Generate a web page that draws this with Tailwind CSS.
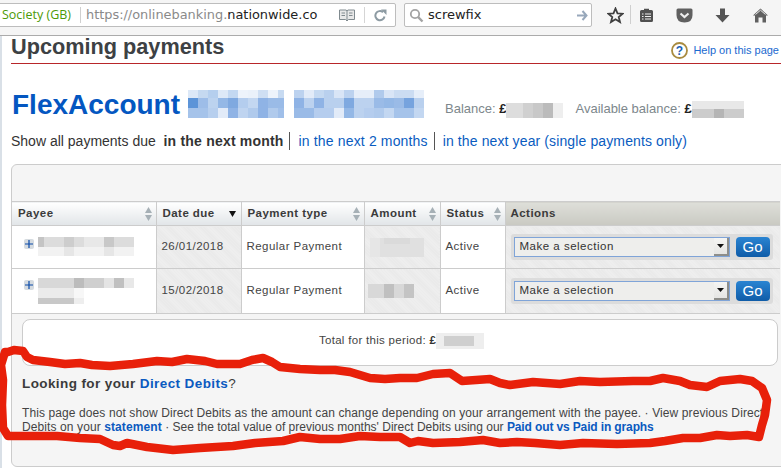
<!DOCTYPE html>
<html lang="en">
<head>
<meta charset="utf-8">
<title>Upcoming payments</title>
<script src="https://cdn.jsdelivr.net/npm/@tailwindcss/browser@4"></script>
</head>
<body class="w-[781px] h-[468px] overflow-hidden bg-white font-['Liberation_Sans',Arial,sans-serif] relative">
<!-- browser toolbar -->
<header class="h-[36px] bg-[#f5f5f5] border-b border-b-[#ababab] flex items-start font-['DejaVu_Sans',sans-serif]">
  <div class="mt-[3px] -ml-[4px] w-[400px] h-[24px] bg-white border border-[#bdbdbd] rounded-[2px] flex items-center text-[12.9px] shrink-0">
    <span class="ml-[5px] text-[#4c9a06] w-[76px] whitespace-nowrap font-['Open_Sans',sans-serif] text-[12.5px]">Society (GB)</span>
    <span class="w-px h-[16px] bg-[#d0d0d0] ml-[2px]"></span>
    <span class="ml-[5px] whitespace-nowrap text-[#8a8a8a] w-[232px]">https://onlinebanking.<span class="text-[#222]">nationwide.co</span></span>
    <svg class="ml-[21px]" width="16" height="13" viewBox="0 0 16 13"><path d="M0.5 1H7.2L8 2L8.8 1H15.5V10.5H9.5L8 12L6.5 10.5H0.5Z" fill="#e8e8e8" stroke="#808a8f"/><path d="M8 2V11M2.5 4H6M2.5 6.5H6M10 4H13.5M10 6.5H13.5" stroke="#808a8f"/></svg>
    <span class="w-px h-[16px] bg-[#d5d5d5] ml-[9px]"></span>
    <svg class="ml-[9px]" width="13" height="13" viewBox="0 0 13 13"><path d="M10.5 7.5A4.6 4.6 0 1 1 9 3.2" fill="none" stroke="#8d9ba3" stroke-width="2"/><path d="M7 .5L12.5 .5V6Z" fill="#8d9ba3"/></svg>
  </div>
  <div class="mt-[3px] ml-[8px] w-[188px] h-[24px] bg-white border border-[#bdbdbd] rounded-[2px] flex items-center text-[13px] shrink-0">
    <svg class="ml-[4px]" width="15" height="15" viewBox="0 0 15 15"><circle cx="6" cy="6" r="4.2" fill="none" stroke="#a3a3a3" stroke-width="1.8"/><path d="M9.2 9.2L13.5 13.5" stroke="#a3a3a3" stroke-width="2.4"/></svg>
    <span class="ml-[4px] text-[#222] flex-1">screwfix</span>
    <svg class="mr-[3px]" width="12" height="11" viewBox="0 0 12 11"><path d="M1 5.5H10M6.5 1L10.5 5.5L6.5 10" fill="none" stroke="#98a8bb" stroke-width="2"/></svg>
  </div>
  <svg class="mt-[7px] ml-[15px]" width="17" height="17" viewBox="0 0 17 17"><path d="M8.5 1.5L10.5 6.3L15.7 6.7L11.7 10L13 15L8.5 12.3L4 15L5.3 10L1.3 6.7L6.5 6.3Z" fill="none" stroke="#3f3f3f" stroke-width="1.8"/></svg>
  <span class="w-px h-[19px] bg-[#cfcfcf] mt-[5px] ml-[6px]"></span>
  <svg class="mt-[8px] ml-[8px]" width="15" height="15" viewBox="0 0 15 15"><path d="M1 3.5Q1 2 2.5 2H5V.8H10V2H12.500Q14 2 14 3.500V12.500Q14 14 12.500 14H2.500Q1 14 1 12.500Z" fill="#505050"/><path d="M3 6H4.500M6 6H12M3 8.500H4.500M6 8.500H12M3 11H4.500M6 11H12" stroke="#eee"/></svg>
  <svg class="mt-[8px] ml-[22px]" width="17" height="15" viewBox="0 0 17 15"><path d="M0.500 2Q.5 .5 2 .5H15Q16.500 .5 16.500 2V7Q16.500 14.500 8.500 14.500Q.5 14.500 .5 7Z" fill="#606060"/><path d="M4.500 5.500L8.500 9L12.500 5.500" fill="none" stroke="#eee" stroke-width="2.200"/></svg>
  <svg class="mt-[8px] ml-[22px]" width="15" height="15" viewBox="0 0 15 15"><path d="M5 0.500H10V7H14.500L7.500 14.500L.5 7H5Z" fill="#555"/></svg>
  <svg class="mt-[8px] ml-[23px]" width="15" height="15" viewBox="0 0 15 15"><path d="M7.500 .5L15 7.500H13V14.500H9.500V9.500H5.500V14.500H2V7.500H0Z" fill="#606060"/><path d="M2.500 6.500L7.500 2.200L12.500 6.500" fill="none" stroke="#e8e8e8"/></svg>
</header>

<!-- page -->
<main class="h-[432px] overflow-hidden border-l-2 border-l-[#d9e0e7] pl-[9px] flex flex-col">
  <div class="h-[28px] border-b border-b-[#b8262a] flex items-start justify-between">
    <h1 class="text-[21.7px] leading-[24px] font-bold text-[#3d4144] -mt-[1px]">Upcoming payments</h1>
    <div class="flex items-center gap-[5px] mt-[6px] pr-[2px]">
      <svg width="17" height="17" viewBox="0 0 17 17"><circle cx="8.500" cy="8.500" r="7.500" fill="#fff" stroke="#a98b3f" stroke-width="1.800"/><text x="8.500" y="13" text-anchor="middle" font-size="12" font-weight="700" fill="#1a5fb4" font-family="Liberation Sans">?</text></svg>
      <a class="text-[11px] text-[#1b69cf] whitespace-nowrap">Help on this page</a>
    </div>
  </div>

  <div class="flex items-end mt-[25px] h-[29px]">
    <h2 class="text-[28px] leading-[29px] font-bold text-[#0457c1] ml-px translate-y-[1px]">FlexAccount</h2>
    <svg class="ml-[8px] shrink-0" width="236" height="28" viewBox="0 0 236 28" shape-rendering="crispEdges">
      <g><rect x="0" y="0" width="10" height="8" fill="#dce8f7"/><rect x="10" y="0" width="10" height="8" fill="#c5d9f0"/><rect x="20" y="0" width="10" height="8" fill="#b5cfee"/><rect x="30" y="0" width="10" height="8" fill="#dde9f7"/><rect x="40" y="0" width="10" height="8" fill="#c3d8f1"/><rect x="50" y="0" width="10" height="8" fill="#edf3fb"/><rect x="60" y="0" width="10" height="8" fill="#eaf1fa"/><rect x="70" y="0" width="10" height="8" fill="#cfdff3"/><rect x="80" y="0" width="10" height="8" fill="#edf3fb"/><rect x="90" y="0" width="6" height="8" fill="#c7daf1"/>
      <rect x="0" y="8" width="10" height="10" fill="#5c94d8"/><rect x="10" y="8" width="10" height="10" fill="#9dbde8"/><rect x="20" y="8" width="10" height="10" fill="#bcd3ef"/><rect x="30" y="8" width="10" height="10" fill="#94b8e6"/><rect x="40" y="8" width="10" height="10" fill="#7fa9e0"/><rect x="50" y="8" width="10" height="10" fill="#b4cdee"/><rect x="60" y="8" width="10" height="10" fill="#c3d7f1"/><rect x="70" y="8" width="10" height="10" fill="#8fb3e5"/><rect x="80" y="8" width="16" height="10" fill="#9abbe7"/>
      <rect x="0" y="18" width="20" height="10" fill="#a5c3ea"/><rect x="20" y="18" width="10" height="10" fill="#b7cfee"/><rect x="30" y="18" width="10" height="10" fill="#e2ebf8"/><rect x="40" y="18" width="10" height="10" fill="#8fb3e5"/><rect x="50" y="18" width="10" height="10" fill="#bfd4f0"/><rect x="60" y="18" width="10" height="10" fill="#b0caec"/><rect x="70" y="18" width="10" height="10" fill="#8fb3e5"/><rect x="80" y="18" width="10" height="10" fill="#b0caec"/><rect x="90" y="18" width="6" height="10" fill="#a0bfe9"/></g>
      <g transform="translate(106 0)"><rect x="0" y="0" width="10" height="8" fill="#bcd2ef"/><rect x="10" y="0" width="10" height="8" fill="#e2ebf8"/><rect x="20" y="0" width="10" height="8" fill="#c5d9f1"/><rect x="30" y="0" width="10" height="8" fill="#b9d0ee"/><rect x="40" y="0" width="10" height="8" fill="#d9e5f6"/><rect x="50" y="0" width="10" height="8" fill="#bcd2ef"/><rect x="60" y="0" width="20" height="8" fill="#e6eef9"/><rect x="80" y="0" width="10" height="8" fill="#b0caec"/><rect x="90" y="0" width="10" height="8" fill="#d9e5f6"/><rect x="100" y="0" width="20" height="8" fill="#cbdcf2"/><rect x="120" y="0" width="10" height="8" fill="#e6eef9"/>
      <rect x="0" y="8" width="10" height="10" fill="#8fb3e5"/><rect x="10" y="8" width="10" height="10" fill="#bcd2ef"/><rect x="20" y="8" width="10" height="10" fill="#8fb3e5"/><rect x="30" y="8" width="20" height="10" fill="#b9d0ee"/><rect x="50" y="8" width="10" height="10" fill="#7fa9e0"/><rect x="60" y="8" width="20" height="10" fill="#bcd2ef"/><rect x="80" y="8" width="10" height="10" fill="#9abbe7"/><rect x="90" y="8" width="10" height="10" fill="#94b8e6"/><rect x="100" y="8" width="10" height="10" fill="#9abbe7"/><rect x="110" y="8" width="10" height="10" fill="#76a3de"/><rect x="120" y="8" width="10" height="10" fill="#b9d0ee"/>
      <rect x="0" y="18" width="20" height="10" fill="#9abbe7"/><rect x="20" y="18" width="20" height="10" fill="#b5cdee"/><rect x="40" y="18" width="10" height="10" fill="#e2ebf8"/><rect x="50" y="18" width="10" height="10" fill="#94b8e6"/><rect x="60" y="18" width="10" height="10" fill="#bcd2ef"/><rect x="70" y="18" width="10" height="10" fill="#b5cdee"/><rect x="80" y="18" width="10" height="10" fill="#b0caec"/><rect x="90" y="18" width="10" height="10" fill="#c3d7f1"/><rect x="100" y="18" width="20" height="10" fill="#a5c3ea"/><rect x="120" y="18" width="10" height="10" fill="#c3d7f1"/></g>
    </svg>
    <div class="flex items-end text-[13px] text-[#7d878c] ml-[21px] h-[22px] whitespace-nowrap">
      <span>Balance: <b class="text-[#222]">£</b></span>
      <svg width="57" height="15" viewBox="0 0 57 15" shape-rendering="crispEdges"><rect width="57" height="15" fill="#eee"/><rect x="0" width="17" height="15" fill="#ddd"/><rect x="17" width="10" height="15" fill="#d0d0d0"/><rect x="27" width="10" height="15" fill="#c8c8c8"/><rect x="37" width="10" height="15" fill="#bbb"/></svg>
      <span class="ml-[12px]">Available balance: <b class="text-[#222]">£</b></span>
      <svg width="52" height="17" viewBox="0 0 52 17" shape-rendering="crispEdges"><rect width="52" height="17" fill="#e8e8e8"/><rect y="8" width="52" height="9" fill="#ccc"/><rect x="22" y="8" width="10" height="9" fill="#b5b5b5"/></svg>
    </div>
  </div>

  <p class="mt-[14px] text-[14px] leading-[18px] text-[#333] flex whitespace-nowrap">
    <span>Show all payments due&nbsp; <b class="tracking-[.2px]">in the next month</b></span>
    <a class="ml-[5px] pl-[9px] border-l border-l-[#555] text-[#0a5cbf] tracking-[.15px]">in the next 2 months</a>
    <a class="ml-[6px] pl-[8px] border-l border-l-[#555] text-[#0a5cbf] tracking-[.12px]">in the next year (single payments only)</a>
  </p>

  <!-- panel -->
  <section class="mt-[14px] w-[800px] h-[303px] shrink-0 border border-[#ccc] rounded-[6px] bg-[#f5f5f5] flex flex-col">
    <div class="h-[36px] shrink-0"></div>
    <table class="table-fixed border-collapse w-[768px] text-[11.5px] tracking-[.45px] text-[#444] shrink-0">
      <colgroup><col class="w-[144px]"><col class="w-[85px]"><col class="w-[123px]"><col class="w-[76px]"><col class="w-[65px]"><col class="w-[275px]"></colgroup>
      <thead>
        <tr class="h-[24px] text-left text-[11.5px] font-bold text-[#3b3b3b]">
          <th class="border border-[#ccc] border-l-0 bg-linear-to-b from-white to-[#e1e5e8] pl-[6px] pr-[4px]"><span class="flex justify-between items-center"><span>Payee</span><svg width="7" height="14" viewBox="0 0 7 14"><path d="M3.500 0L7 6H0Z" fill="#a6b0b6"/><path d="M0 8H7L3.500 14Z" fill="#a6b0b6"/></svg></span></th>
          <th class="border border-[#ccc] bg-linear-to-b from-white to-[#e1e5e8] pl-[6px] pr-[4px]"><span class="flex justify-between items-center"><span>Date due</span><svg class="mr-px" width="7" height="6" viewBox="0 0 7 6"><path d="M0 0H7L3.500 6Z" fill="#111"/></svg></span></th>
          <th class="border border-[#ccc] bg-linear-to-b from-white to-[#e1e5e8] pl-[6px] pr-[4px]"><span class="flex justify-between items-center"><span>Payment type</span><svg width="7" height="14" viewBox="0 0 7 14"><path d="M3.500 0L7 6H0Z" fill="#a6b0b6"/><path d="M0 8H7L3.500 14Z" fill="#a6b0b6"/></svg></span></th>
          <th class="border border-[#ccc] bg-linear-to-b from-white to-[#e1e5e8] pl-[6px] pr-[4px]"><span class="flex justify-between items-center"><span>Amount</span><svg width="7" height="14" viewBox="0 0 7 14"><path d="M3.500 0L7 6H0Z" fill="#a6b0b6"/><path d="M0 8H7L3.500 14Z" fill="#a6b0b6"/></svg></span></th>
          <th class="border border-[#ccc] bg-linear-to-b from-white to-[#e1e5e8] pl-[6px] pr-[4px]"><span class="flex justify-between items-center"><span>Status</span><svg width="7" height="14" viewBox="0 0 7 14"><path d="M3.500 0L7 6H0Z" fill="#a6b0b6"/><path d="M0 8H7L3.500 14Z" fill="#a6b0b6"/></svg></span></th>
          <th class="border border-[#ccc] border-r-0 bg-linear-to-b from-[#dedfd9] to-[#c9c9c2] px-[5px]">Actions</th>
        </tr>
      </thead>
      <tbody>
        <tr class="h-[43px]">
          <td class="border border-[#ccc] border-l-0 bg-white pl-[12px] align-top pt-[11px]"><div class="flex items-start gap-[1px]"><span class="mt-[2px] w-[10px] h-[10px] bg-[#d5dbe0] rounded-[2px] flex items-center justify-center shrink-0"><svg width="8" height="8" viewBox="0 0 8 8"><path d="M4 0V8M0 4H8" stroke="#0b4aa8" stroke-width="1.200"/></svg></span>
            <svg class="ml-[3px]" width="96" height="19" viewBox="0 0 96 19" shape-rendering="crispEdges"><rect width="96" height="10" fill="#dcdcdc"/><rect width="6" height="10" fill="#c4c4c4"/><rect x="26" width="10" height="10" fill="#cdcdcd"/><rect x="66" width="10" height="10" fill="#c8c8c8"/><rect x="46" width="20" height="10" fill="#e8e8e8"/><rect y="10" width="96" height="9" fill="#f2f2f2"/><rect x="26" y="10" width="10" height="9" fill="#e6e6e6"/><rect x="66" y="10" width="10" height="9" fill="#e6e6e6"/></svg></div></td>
          <td class="border border-[#ccc] bg-[repeating-linear-gradient(45deg,#e8e8e8_0,#e8e8e8_1px,#f0f0f0_1px,#f0f0f0_2px)] px-[5px]">26/01/2018</td>
          <td class="border border-[#ccc] bg-white px-[5px]">Regular Payment</td>
          <td class="border border-[#ccc] bg-[repeating-linear-gradient(45deg,#e8e8e8_0,#e8e8e8_1px,#f0f0f0_1px,#f0f0f0_2px)] pl-[5px]"><svg width="54" height="19" viewBox="0 0 54 19" shape-rendering="crispEdges"><rect width="54" height="19" fill="#e0e0e0"/><rect x="0" width="10" height="19" fill="#e6e6e6"/><rect x="14" y="0" width="26" height="6" fill="#dadada"/></svg></td>
          <td class="border border-[#ccc] bg-white px-[5px]">Active</td>
          <td class="border border-[#ccc] border-r-0 bg-[repeating-linear-gradient(45deg,#e8e8e8_0,#e8e8e8_1px,#f0f0f0_1px,#f0f0f0_2px)] pl-[5px]"><div class="w-[262px] h-[26px] bg-[#dcdcdc] rounded-[3px] flex items-center pl-[3px] gap-[6px]">
            <div class="w-[216px] h-[20px] bg-[#eeeeec] border border-[#7fa4d8] flex items-center justify-between pl-[5px] tracking-[.5px] text-[#333]"><span>Make a selection</span><span class="w-[15px] h-full bg-linear-to-b from-[#f5f5f3] to-[#e5e5e3] border-r-2 border-b-2 border-r-[#8e8e8a] border-b-[#8e8e8a] flex items-center justify-center"><svg width="7" height="4" viewBox="0 0 7 4"><path d="M0 0H7L3.500 4Z" fill="#111"/></svg></span></div>
            <span class="w-[34px] h-[20px] rounded-[4px] bg-linear-to-b from-[#2a84d2] to-[#0f5ca8] text-white flex items-center justify-center text-[15px] tracking-normal">Go</span></div></td>
        </tr>
        <tr class="h-[45px]">
          <td class="border border-[#ccc] border-l-0 bg-white pl-[12px] align-top pt-[9px]"><div class="flex items-start gap-[1px]"><span class="mt-[2px] w-[10px] h-[10px] bg-[#d5dbe0] rounded-[2px] flex items-center justify-center shrink-0"><svg width="8" height="8" viewBox="0 0 8 8"><path d="M4 0V8M0 4H8" stroke="#0b4aa8" stroke-width="1.200"/></svg></span>
            <svg class="ml-[3px]" width="96" height="26" viewBox="0 0 96 26" shape-rendering="crispEdges"><rect width="96" height="10" fill="#d8d8d8"/><rect x="36" width="10" height="10" fill="#bcbcbc"/><rect x="46" width="20" height="10" fill="#cfcfcf"/><rect x="66" width="10" height="10" fill="#e4e4e4"/><rect x="76" width="10" height="10" fill="#c0c0c0"/><rect x="86" width="10" height="10" fill="#e8e8e8"/><rect y="10" width="36" height="10" fill="#ebebeb"/><rect x="36" y="10" width="10" height="10" fill="#f7f7f7"/><rect y="20" width="36" height="6" fill="#c8c8c8"/><rect x="36" y="20" width="10" height="6" fill="#eee"/></svg></div></td>
          <td class="border border-[#ccc] bg-[repeating-linear-gradient(45deg,#e8e8e8_0,#e8e8e8_1px,#f0f0f0_1px,#f0f0f0_2px)] px-[5px]">15/02/2018</td>
          <td class="border border-[#ccc] bg-white px-[5px]">Regular Payment</td>
          <td class="border border-[#ccc] bg-[repeating-linear-gradient(45deg,#e8e8e8_0,#e8e8e8_1px,#f0f0f0_1px,#f0f0f0_2px)] pl-[3px]"><svg width="46" height="14" viewBox="0 0 46 14" shape-rendering="crispEdges"><rect width="46" height="14" fill="#d8d8d8"/><rect x="16" width="10" height="14" fill="#c0c0c0"/><rect x="36" width="10" height="14" fill="#c4c4c4"/></svg></td>
          <td class="border border-[#ccc] bg-white px-[5px]">Active</td>
          <td class="border border-[#ccc] border-r-0 bg-[repeating-linear-gradient(45deg,#e8e8e8_0,#e8e8e8_1px,#f0f0f0_1px,#f0f0f0_2px)] pl-[5px]"><div class="w-[262px] h-[26px] bg-[#dcdcdc] rounded-[3px] flex items-center pl-[3px] gap-[6px]">
            <div class="w-[216px] h-[20px] bg-[#eeeeec] border border-[#7fa4d8] flex items-center justify-between pl-[5px] tracking-[.5px] text-[#333]"><span>Make a selection</span><span class="w-[15px] h-full bg-linear-to-b from-[#f5f5f3] to-[#e5e5e3] border-r-2 border-b-2 border-r-[#8e8e8a] border-b-[#8e8e8a] flex items-center justify-center"><svg width="7" height="4" viewBox="0 0 7 4"><path d="M0 0H7L3.500 4Z" fill="#111"/></svg></span></div>
            <span class="w-[34px] h-[20px] rounded-[4px] bg-linear-to-b from-[#2a84d2] to-[#0f5ca8] text-white flex items-center justify-center text-[15px] tracking-normal">Go</span></div></td>
        </tr>
      </tbody>
    </table>
    <div class="ml-[10px] mt-[5px] w-[756px] h-[47px] shrink-0 bg-white border border-[#ccc] rounded-[8px] flex items-center justify-center text-[11.500px] tracking-[.3px] text-[#444] pb-[4px] pl-[3px]">
      <span>Total for this period: <b class="text-[#333]">£</b></span>
      <svg width="48" height="16" viewBox="0 0 48 16" shape-rendering="crispEdges"><rect width="48" height="16" fill="#eee"/><rect x="8" y="3" width="30" height="10" fill="#cfcfcf"/></svg>
    </div>
    <div class="pl-[10px] pt-[9px] w-[781px]">
      <h3 class="text-[13.500px] leading-[18px] font-bold text-[#3b3b3b] tracking-[.4px]">Looking for your <a class="text-[#0b5ac0]">Direct Debits</a><span class="font-normal">?</span></h3>
      <p class="mt-[13px] text-[12px] leading-[14px] text-[#444] w-[752px] tracking-[.1px]">This page does not show Direct Debits as the amount can change depending on your arrangement with the payee. · View previous Direct Debits on your <a class="font-bold text-[#0b5ac0]">statement</a><span class="tracking-[0px]"> · See the total value of previous months' Direct Debits using our </span><a class="font-bold text-[#0b5ac0] tracking-[-.13px]">Paid out vs Paid in graphs</a></p>
    </div>
  </section>
</main>

<!-- hand-drawn annotation lying over the page -->
<svg class="absolute left-0 top-0 pointer-events-none" width="781" height="468" viewBox="0 0 781 468"><path d="M8 352L14 350L23 351L27 357L33 360L50 362L65 364L80 363L92 365L110 366L133 364L157 361L172 362L187 359L205 361L217 364L240 364L252 360L263 358L272 362L280 367L300 369L320 370L335 370L350 372L370 378L385 379L400 378L417 378L433 374L450 373L456 377L462 381L490 379L500 383L510 385L533 382L560 384L580 381L600 382L633 381L650 381L663 378L680 381L690 385L707 387L720 381L740 379L752 381L762 388L767 400L765 415L762 425L759 437L747 435L730 436L717 435L700 438L683 438L665 441L650 443L617 444L583 443L560 445L535 443L517 442L500 443L483 440L460 442L433 443L418 441L410 443L400 437L380 437L360 436L340 439L320 439L300 437L283 441L255 443L233 446L200 448L173 450L147 447L127 443L120 446L113 445L100 439L80 438L57 436L27 436L8 436L3 428L2 405L3 380L1 365L5 352Z" fill="none" stroke="#e8200a" stroke-width="8.500" stroke-linejoin="round" stroke-linecap="round"/></svg>
</body>
</html>
